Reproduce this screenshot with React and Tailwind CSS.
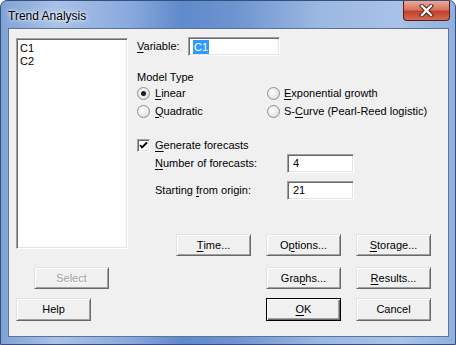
import React from "react";

const sunken =
  "bg-white border border-t-[#a0a0a0] border-l-[#a0a0a0] border-b-white border-r-white shadow-[inset_1px_1px_0_#696969,inset_-1px_-1px_0_#e3e3e3]";

const Btn = ({ children, disabled, primary, className = "" }) => (
  <div
    className={`flex items-center justify-center whitespace-nowrap ${
      primary
        ? "border border-black shadow-[inset_1px_1px_0_#fff,inset_-1px_-1px_0_#696969,inset_-2px_-2px_0_#a0a0a0]"
        : "border border-t-[#e3e3e3] border-l-[#e3e3e3] border-b-[#696969] border-r-[#696969] shadow-[inset_1px_1px_0_#fff,inset_-1px_-1px_0_#a0a0a0]"
    } bg-[#f0f0f0] ${disabled ? "text-[#a0a0a0] [text-shadow:1px_1px_0_#fff]" : "text-black"} ${className}`}
  >
    {children}
  </div>
);

const Key = ({ children }) => <span className="underline underline-offset-[2px]">{children}</span>;

const Radio = ({ checked }) => (
  <div className="w-[13px] h-[13px] rounded-full border border-[#8e8f8f] bg-[radial-gradient(circle_at_40%_40%,#ffffff,#e6e6e6_60%,#cfcfcf)] flex items-center justify-center shrink-0">
    {checked && <div className="w-[5px] h-[5px] rounded-full bg-[#1c1c1c]" />}
  </div>
);

const Check = () => (
  <div className="w-[13px] h-[13px] bg-white border border-t-[#a0a0a0] border-l-[#a0a0a0] border-b-white border-r-white shadow-[inset_1px_1px_0_#696969,inset_-1px_-1px_0_#e3e3e3] flex items-center justify-center shrink-0">
    <svg width="9" height="9" viewBox="0 0 9 9">
      <path d="M1 4 L3 6.5 L8 1.5" stroke="#000" strokeWidth="1.8" fill="none" />
    </svg>
  </div>
);

export default function App() {
  return (
    <div className="w-[456px] h-[345px] overflow-hidden rounded-t-[7px] border border-[#35507a] bg-[linear-gradient(90deg,#7fa2d6_0%,#a9c1e6_12%,#8aaade_28%,#5f8acb_40%,#6f95d0_52%,#9bb8e2_70%,#a8c2e8_88%,#8fb0e0_100%)] font-['Liberation_Sans',Arial,sans-serif] text-[11px] leading-[13px] text-black flex flex-col">
      {/* title bar */}
      <div className="h-[27px] flex items-start justify-between shrink-0">
        <div className="pl-[7px] pt-[8px] text-[12px] leading-[14px] [text-shadow:0_0_6px_#fff,0_0_3px_#fff]">
          Trend Analysis
        </div>
        <div className="mr-[5px] w-[47px] h-[20px] rounded-b-[4px] border border-t-0 border-[#5b1e14] bg-[linear-gradient(180deg,#e9a99a_0%,#d7745f_45%,#c2412a_55%,#d46a52_100%)] flex items-center justify-center">
          <svg width="15" height="13" viewBox="0 0 15 13">
            <path d="M3 2 L12 11 M12 2 L3 11" stroke="#4a1a12" strokeWidth="4.2" strokeLinecap="square" />
            <path d="M3 2 L12 11 M12 2 L3 11" stroke="#fff" strokeWidth="2.4" strokeLinecap="square" />
          </svg>
        </div>
      </div>

      {/* client area */}
      <div className="ml-[7px] w-[441px] h-[309px] shrink-0 border border-[#5f7396] bg-[#f0f0f0] flex">
        {/* left column */}
        <div className="pl-[7px] pt-[9px] flex flex-col">
          <div className={`w-[112px] h-[211px] ${sunken} px-[3px] pt-[3px]`}>
            <div>C1</div>
            <div>C2</div>
          </div>
          <Btn disabled className="mt-[18px] ml-[18px] w-[75px] h-[22px]">
            Select
          </Btn>
          <Btn className="mt-[9px] w-[75px] h-[23px]">Help</Btn>
        </div>

        {/* right column */}
        <div className="ml-[9px] pt-[8px] flex flex-col whitespace-nowrap">
          <div className="flex items-center h-[19px]">
            <div className="w-[51px]">
              <Key>V</Key>ariable:
            </div>
            <div className={`w-[92px] h-[19px] ${sunken} flex items-center pl-[4px]`}>
              <span className="bg-[#3399ff] text-white px-[1px] leading-[14px]">C1</span>
            </div>
          </div>

          <div className="mt-[15px] h-[13px]">Model Type</div>
          <div className="grid grid-cols-[130px_170px]">
            <div className="h-[18px] flex items-center">
              <Radio checked />
              <span className="ml-[5px]">
                <Key>L</Key>inear
              </span>
            </div>
            <div className="h-[18px] flex items-center">
              <Radio />
              <span className="ml-[4px]">
                <Key>E</Key>xponential growth
              </span>
            </div>
            <div className="h-[18px] flex items-center">
              <Radio />
              <span className="ml-[5px]">
                <Key>Q</Key>uadratic
              </span>
            </div>
            <div className="h-[18px] flex items-center">
              <Radio />
              <span className="ml-[4px]">
                S-<Key>C</Key>urve (Pearl-Reed logistic)
              </span>
            </div>
          </div>

          <div className="mt-[16px] h-[18px] flex items-center">
            <Check />
            <span className="ml-[5px]">
              <Key>G</Key>enerate forecasts
            </span>
          </div>
          <div className="flex items-center pl-[18px]">
            <div className="w-[132px]">
              <Key>N</Key>umber of forecasts:
            </div>
            <div className={`w-[67px] h-[19px] ${sunken} flex items-center pl-[5px]`}>4</div>
          </div>
          <div className="mt-[8px] flex items-center pl-[18px]">
            <div className="w-[132px]">
              Starting <Key>f</Key>rom origin:
            </div>
            <div className={`w-[67px] h-[19px] ${sunken} flex items-center pl-[5px]`}>21</div>
          </div>

          <div className="mt-[34px] pl-[39px] flex gap-[15px]">
            <Btn className="w-[75px] h-[22px]">
              <Key>T</Key>ime...
            </Btn>
            <Btn className="w-[75px] h-[22px]">
              O<Key>p</Key>tions...
            </Btn>
            <Btn className="w-[75px] h-[22px]">
              <Key>S</Key>torage...
            </Btn>
          </div>
          <div className="mt-[11px] pl-[129px] flex gap-[15px]">
            <Btn className="w-[75px] h-[22px]">
              Gra<Key>p</Key>hs...
            </Btn>
            <Btn className="w-[75px] h-[22px]">
              <Key>R</Key>esults...
            </Btn>
          </div>
          <div className="mt-[9px] pl-[129px] flex gap-[15px]">
            <Btn primary className="w-[75px] h-[23px]">
              <Key>O</Key>K
            </Btn>
            <Btn className="w-[75px] h-[23px]">Cancel</Btn>
          </div>
        </div>
      </div>
    </div>
  );
}
